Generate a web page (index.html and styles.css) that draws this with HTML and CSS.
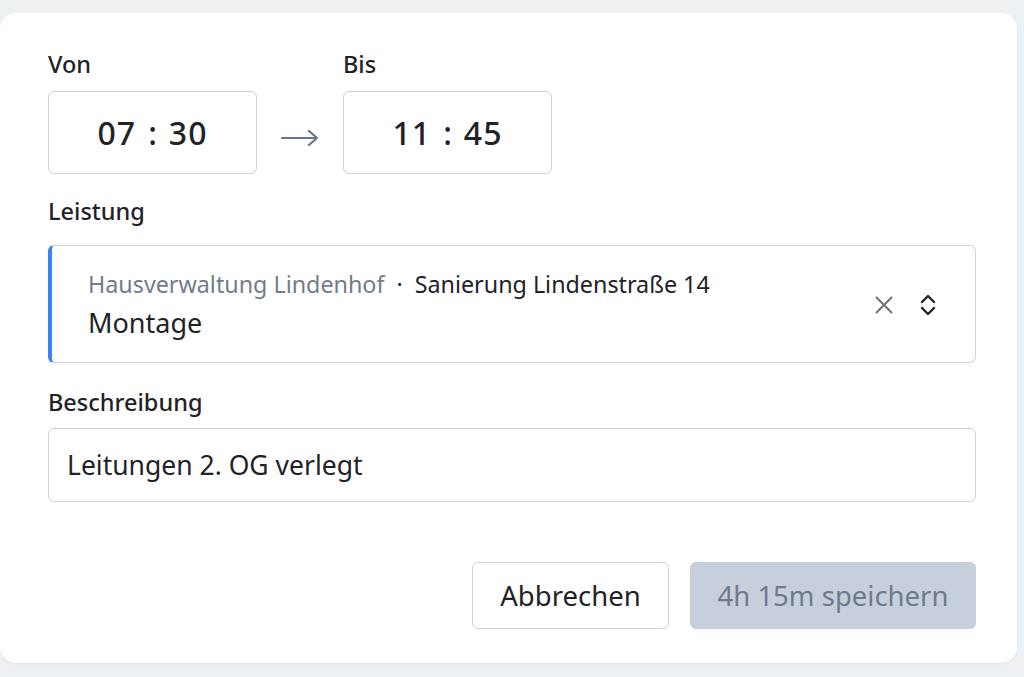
FILE: index.html
```html
<!DOCTYPE html>
<html lang="de">
<head>
<meta charset="utf-8">
<link rel="stylesheet" href="styles.css">
</head>
<body>
<div class="card">
  <div class="time-row">
    <div class="time-field">
      <div class="label">Von</div>
      <div class="time-box"><span>07</span><span class="colon">:</span><span>30</span></div>
    </div>
    <svg class="arrow" width="38" height="20" viewBox="0 0 38 20"><path d="M1 10 H36 M28 3 L36 10 L28 17" fill="none" stroke="#64748b" stroke-width="2.2" stroke-linecap="round" stroke-linejoin="round"/></svg>
    <div class="time-field">
      <div class="label">Bis</div>
      <div class="time-box"><span>11</span><span class="colon">:</span><span>45</span></div>
    </div>
  </div>

  <div class="label label-leistung">Leistung</div>
  <div class="select">
    <div class="select-text">
      <div class="crumb"><span class="client">Hausverwaltung Lindenhof</span><span class="dot">·</span><span class="project">Sanierung Lindenstraße 14</span></div>
      <div class="service">Montage</div>
    </div>
    <div class="select-icons">
      <svg class="icon-x" width="20" height="20" viewBox="0 0 20 20"><path d="M2.5 2.5 L17.5 17.5 M17.5 2.5 L2.5 17.5" fill="none" stroke="#71717a" stroke-width="2" stroke-linecap="round"/></svg>
      <svg class="icon-chev" width="18" height="24" viewBox="0 0 18 24"><path d="M3 9 L9 3 L15 9 M3 15 L9 21 L15 15" fill="none" stroke="#1f2328" stroke-width="2.4" stroke-linecap="round" stroke-linejoin="round"/></svg>
    </div>
  </div>

  <div class="label label-desc">Beschreibung</div>
  <div class="input">Leitungen 2. OG verlegt</div>

  <div class="actions">
    <button class="btn btn-cancel">Abbrechen</button>
    <button class="btn btn-save">4h 15m speichern</button>
  </div>
</div>
</body>
</html>
```

FILE: styles.css
```css
html, body {
  margin: 0;
  padding: 0;
}
body {
  background: #eef1f4;
  font-family: "Noto Sans", "Open Sans", sans-serif;
  color: #1f2328;
  width: 1024px;
  height: 677px;
  overflow: hidden;
}
.card {
  box-sizing: border-box;
  margin-top: 13px;
  width: 1017px;
  height: 650px;
  background: #ffffff;
  border-radius: 16px;
  box-shadow: 0 1px 2px rgba(15, 23, 42, 0.06);
  padding: 36px 41px 0 48px;
}
.label {
  font-size: 23.5px;
  line-height: 30px;
  font-weight: 500;
  color: #1f2328;
}
.time-row {
  display: flex;
  align-items: flex-end;
}
.time-field .label {
  margin-bottom: 12px;
}
.time-box {
  box-sizing: border-box;
  width: 209px;
  height: 83px;
  border: 1px solid #cbd2dc;
  border-radius: 6px;
  display: flex;
  align-items: center;
  justify-content: center;
  gap: 12px;
  font-size: 32px;
  font-weight: 500;
  letter-spacing: 1px;
  color: #1f2328;
}
.time-box .colon {
  letter-spacing: 0;
}
.arrow {
  margin: 0 24px 26px 24px;
}
.label-leistung {
  margin-top: 22px;
  margin-bottom: 19px;
}
.select {
  box-sizing: border-box;
  height: 118px;
  border: 1px solid #cbd2dc;
  border-left: 4px solid #3b82f6;
  border-radius: 6px;
  display: flex;
  align-items: flex-start;
  padding: 23px 38px 0 36px;
}
.select-text {
  flex: 1;
}
.crumb {
  font-size: 23.3px;
  line-height: 30px;
  display: flex;
  align-items: baseline;
}
.client {
  color: #717c8d;
}
.dot {
  margin: 0 12px;
  color: #1f2328;
}
.project {
  color: #1f2328;
}
.service {
  margin-top: 6px;
  font-size: 27px;
  line-height: 36px;
  color: #1f2328;
}
.select-icons {
  display: flex;
  align-items: center;
  gap: 25px;
  margin-top: 24px;
}
.label-desc {
  margin-top: 24px;
  margin-bottom: 11px;
}
.input {
  box-sizing: border-box;
  height: 74px;
  border: 1px solid #cbd2dc;
  border-radius: 6px;
  padding: 0 18px;
  font-size: 26.5px;
  line-height: 72px;
  color: #1f2328;
}
.actions {
  display: flex;
  justify-content: flex-end;
  gap: 21px;
  margin-top: 60px;
}
.btn {
  box-sizing: border-box;
  height: 67px;
  border-radius: 6px;
  font-family: "Noto Sans", "Open Sans", sans-serif;
  font-size: 27.5px;
  padding: 0;
  cursor: pointer;
}
.btn-cancel {
  width: 197px;
  background: #ffffff;
  border: 1px solid #cbd2dc;
  color: #1f2328;
}
.btn-save {
  width: 286px;
  background: #c6cfdb;
  border: 1px solid #c6cfdb;
  color: #6e7b8d;
}
```
